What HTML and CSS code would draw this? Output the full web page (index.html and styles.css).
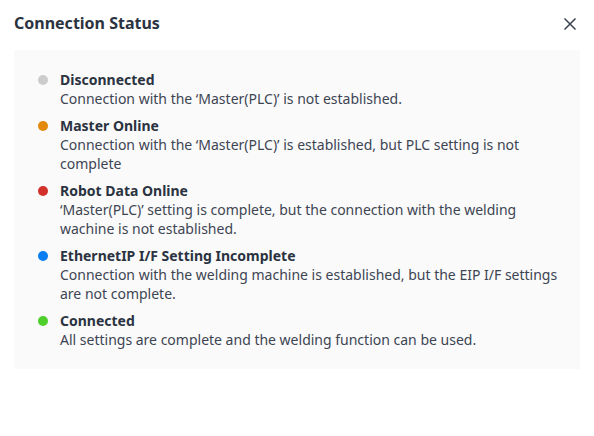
FILE: index.html
```html
<!DOCTYPE html>
<html lang="en">
<head>
<meta charset="utf-8">
<title>Connection Status</title>
<link rel="stylesheet" href="styles.css">
</head>
<body>
<div class="dialog">
  <div class="header">
    <h1 class="title">Connection Status</h1>
    <button class="close" aria-label="Close">
      <svg width="12" height="12" viewBox="0 0 12 12"><path d="M1 1L11 11M11 1L1 11" stroke="#3a4150" stroke-width="1.5" fill="none" stroke-linecap="square"/></svg>
    </button>
  </div>
  <div class="panel">
    <ul class="list">
      <li class="item"><span class="dot dot-gray"></span><div class="text"><div class="name">Disconnected</div><div class="desc">Connection with the ‘Master(PLC)’ is not established.</div></div></li>
      <li class="item"><span class="dot dot-orange"></span><div class="text"><div class="name">Master Online</div><div class="desc">Connection with the ‘Master(PLC)’ is established, but PLC setting is not complete</div></div></li>
      <li class="item"><span class="dot dot-red"></span><div class="text"><div class="name">Robot Data Online</div><div class="desc">‘Master(PLC)’ setting is complete, but the connection with the welding wachine is not established.</div></div></li>
      <li class="item"><span class="dot dot-blue"></span><div class="text"><div class="name">EthernetIP I/F Setting Incomplete</div><div class="desc">Connection with the welding machine is established, but the EIP I/F settings are not complete.</div></div></li>
      <li class="item"><span class="dot dot-green"></span><div class="text"><div class="name">Connected</div><div class="desc">All settings are complete and the welding function can be used.</div></div></li>
    </ul>
  </div>
</div>
</body>
</html>
```
FILE: styles.css
```css
* { box-sizing: border-box; }
html, body { margin: 0; padding: 0; background: #ffffff; }
body { font-family: "Noto Sans", "Open Sans", sans-serif; color: #2c3444; }
.dialog { width: 594px; height: 436px; }
.header { display: flex; justify-content: space-between; align-items: flex-start; padding: 12px 14px 0 14px; height: 50px; }
.title { margin: 0; font-size: 16px; font-weight: 700; line-height: 22px; color: #2b3341; }
.close { width: 20px; height: 20px; margin-top: 2px; padding: 0; border: 0; background: transparent; display: flex; align-items: center; justify-content: center; cursor: pointer; }
.panel { margin: 0 14px; background: #fafafa; padding: 20px 20px 20px 24px; }
.list { list-style: none; margin: 0; padding: 0; display: flex; flex-direction: column; gap: 8px; }
.item { display: flex; align-items: flex-start; }
.dot { flex: none; width: 10px; height: 10px; border-radius: 50%; margin: 5px 12px 0 0; }
.dot-gray { background: #cccccc; }
.dot-orange { background: #e38a0c; }
.dot-red { background: #d2302a; }
.dot-blue { background: #0a7ef2; }
.dot-green { background: #4fcf2b; }
.text { font-size: 14px; line-height: 19px; }
.name { font-weight: 700; color: #2b3341; }
.desc { color: #3d4553; }
```
